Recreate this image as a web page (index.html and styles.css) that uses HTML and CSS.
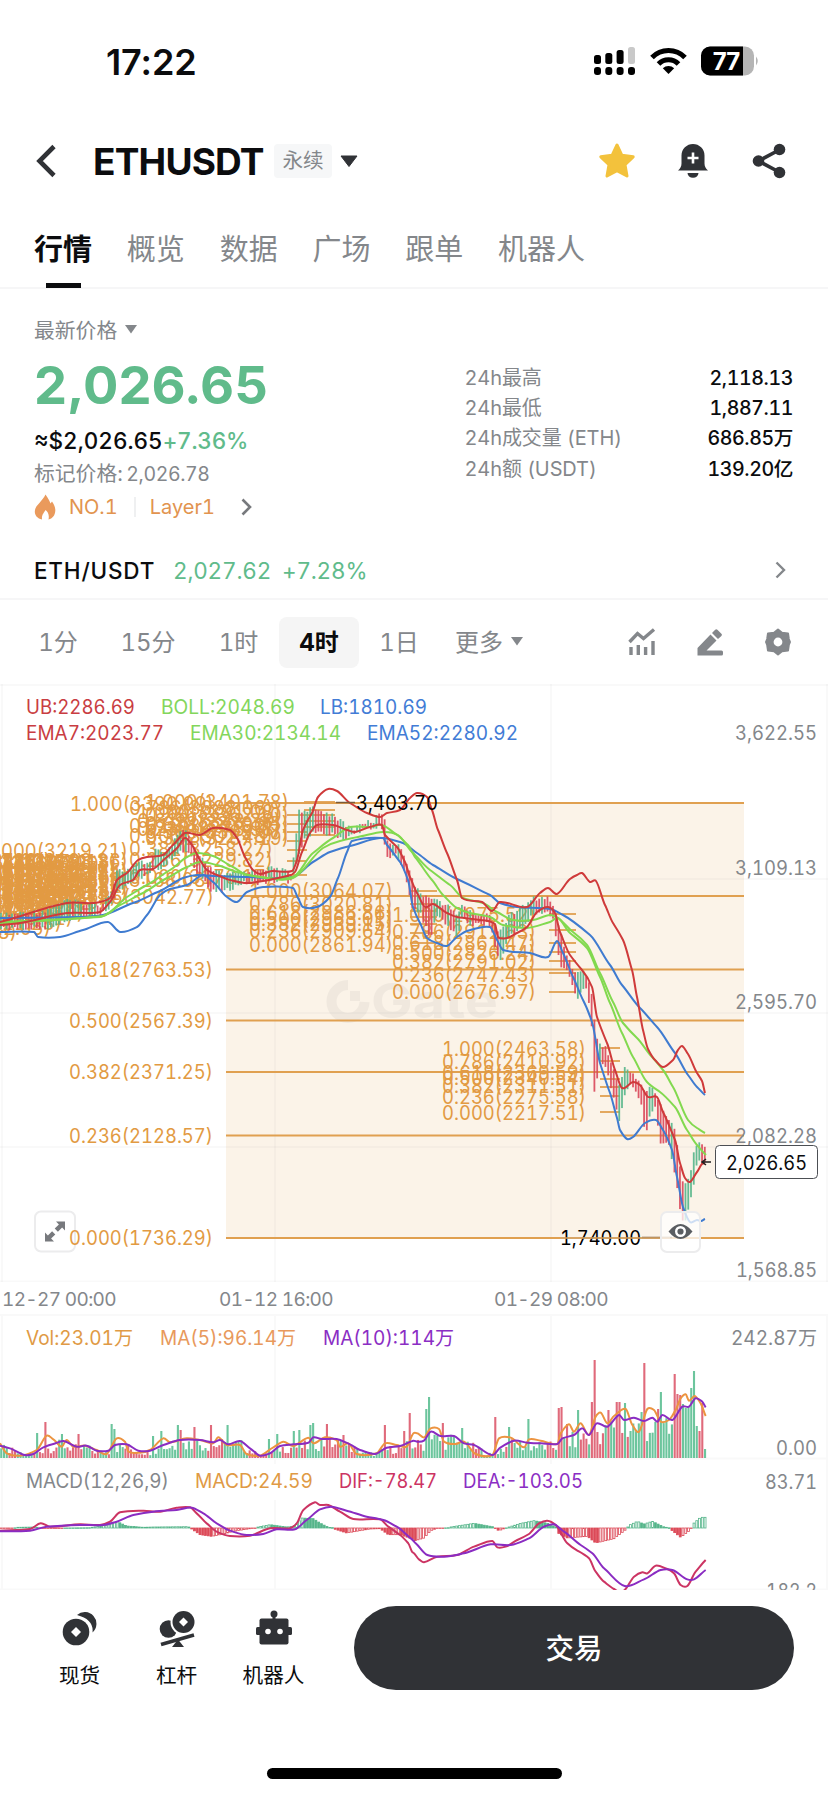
FILE: index.html
```
<!DOCTYPE html>
<html lang="zh-CN">
<head>
    <meta charset="UTF-8">
    <title>ETHUSDT 永续</title>
    <link rel="stylesheet" href="styles.css">
</head>
<body>
    <!-- Status bar -->
    <div class="status">
        <span class="time">17:22</span>
        <svg class="signal" width="166" height="30" viewBox="0 0 166 30">
            <g fill="#000">
                <rect x="0" y="9" width="7" height="9" rx="2.5"/>
                <rect x="11.3" y="7" width="7" height="11" rx="2.5"/>
                <rect x="22.6" y="4" width="7" height="14" rx="2.5"/>
                <rect x="34" y="1" width="7" height="17" rx="2.5" fill="#c9c9c9"/>
                <rect x="0" y="21" width="7" height="8" rx="3"/>
                <rect x="11.3" y="21" width="7" height="8" rx="3"/>
                <rect x="22.6" y="21" width="7" height="8" rx="3"/>
                <rect x="34" y="21" width="7" height="8" rx="3"/>
            </g>
            <g fill="none" stroke="#000" stroke-width="5">
                <path d="M58 11.5a23 23 0 0 1 33 0"/>
                <path d="M64.5 18a14 14 0 0 1 20 0"/>
            </g>
            <path d="M68.8 22.3a8.2 8.2 0 0 1 11.4 0L74.5 28z" fill="#000"/>
            <rect x="107" y="0.5" width="53" height="29" rx="9" fill="#b5b5b5"/>
            <path d="M116 .5h33v29h-33a9 9 0 0 1-9-9v-11a9 9 0 0 1 9-9z" fill="#000"/>
            <path d="M162 10.5q3.5 4.5 0 9z" fill="#b5b5b5"/>
            <text x="118" y="23.5" textLength="29" font-size="24" font-weight="700" fill="#fff">77</text>
        </svg>
    </div>

    <!-- Title -->
    <header class="title">
        <svg class="back" width="22" height="34" viewBox="0 0 22 34"><path d="M19 2.500L4.500 17l14.500 14.500" fill="none" stroke="#303236" stroke-width="4.600"/></svg>
        <h1>ETHUSDT</h1>
        <span class="badge">永续</span>
        <svg class="caret" width="18" height="12" viewBox="0 0 18 12"><path d="M1 1h16L9 11.500z" fill="#303236" stroke="#303236" stroke-linejoin="round"/></svg>
        <div class="actions">
            <svg width="38" height="36" viewBox="0 0 38 36"><path d="M19 2l4.900 10.300 11.300 1.500-8.200 7.900 2 11.300L19 27.600 9 33l2-11.300-8.200-7.900 11.300-1.500z" fill="#f3c23c" stroke="#f3c23c" stroke-width="3" stroke-linejoin="round"/></svg>
            <svg width="32" height="36" viewBox="0 0 32 36">
                <path d="M1 27.500q3.500-3 3.500-7V12.500a11.500 11.500 0 0 1 23 0v8q0 4 3.500 7z" fill="#303236"/>
                <path d="M10.500 30h11a5.500 4.800 0 0 1-11 0z" fill="#303236"/>
                <path d="M16 9.500v11M10.500 15h11" stroke="#fff" stroke-width="2.600"/>
            </svg>
            <svg width="34" height="36" viewBox="0 0 34 36">
                <path d="M28 6.500L6.500 18 28 29.500" fill="none" stroke="#303236" stroke-width="3.600"/>
                <g fill="#303236"><circle cx="27.500" cy="6.500" r="5.800"/><circle cx="6.500" cy="18" r="5.800"/><circle cx="27.500" cy="29.500" r="5.800"/></g>
            </svg>
        </div>
    </header>

    <nav class="tabs">
        <a class="selected">行情</a>
        <a>概览</a>
        <a>数据</a>
        <a>广场</a>
        <a>跟单</a>
        <a>机器人</a>
    </nav>

    <!-- Price -->
    <section class="price">
        <div class="left">
            <div class="label">最新价格<svg width="14" height="10" viewBox="0 0 14 10"><path d="M1 1h12L7 9.500z" fill="#84878b"/></svg></div>
            <div class="last">2,026.65</div>
            <div class="approx">≈$2,026.65<span class="up">+7.36%</span></div>
            <div class="mark">标记价格: <span>2,026.78</span></div>
            <div class="tags">
                <svg width="22" height="26" viewBox="0 0 22 26"><path d="M11.500 0.500C14.500 5 16 7.500 16.500 9.500L18 7.500C20.500 11 21.500 14 21.300 17C21 21.500 18.500 24.500 14.500 25.500C15.500 21 14 18 11.500 16C10 19 7.500 20.500 8 25.500C3.500 24.500 .8 21.500 .8 17.500C.8 11.500 8 8 11.500 .5z" fill="#ea9a5c"/></svg>
                <span>NO.1</span>
                <i></i>
                <span>Layer1</span>
                <svg class="more" width="13" height="18" viewBox="0 0 13 18"><path d="M2.500 1.500L10 9l-7.500 7.500" fill="none" stroke="#77797d" stroke-width="2.600"/></svg>
            </div>
        </div>
        <div class="stats">
            <div><span>24h最高</span><b>2,118.13</b></div>
            <div><span>24h最低</span><b>1,887.11</b></div>
            <div><span>24h成交量 (ETH)</span><b>686.85万</b></div>
            <div><span>24h额 (USDT)</span><b>139.20亿</b></div>
        </div>
    </section>

    <div class="pair">
        <b>ETH/USDT</b>
        <span>2,027.62</span>
        <span>+7.28%</span>
        <svg width="13" height="18" viewBox="0 0 13 18"><path d="M2.500 1.500L10 9l-7.500 7.500" fill="none" stroke="#84878b" stroke-width="2.400"/></svg>
    </div>

    <!-- Intervals -->
    <div class="intervals">
        <div class="periods">
            <span>1分</span>
            <span>15分</span>
            <span>1时</span>
            <span class="selected">4时</span>
            <span>1日</span>
            <span>更多<svg width="14" height="10" viewBox="0 0 14 10"><path d="M1 1h12L7 9.500z" fill="#84878b"/></svg></span>
        </div>
        <div class="tools">
            <svg width="28" height="28" viewBox="0 0 28 28" fill="none" stroke="#84878b" stroke-width="3.400">
                <path d="M1.500 14L9.500 5.500l6 5L26 1.500"/>
                <path d="M3 19v8M10.300 17v10M17.600 19v8M25 13v14"/>
            </svg>
            <svg width="28" height="28" viewBox="0 0 28 28" fill="#84878b">
                <path d="M14.500 6.500l6 6L10.500 22.500H25.500a1.500 1.500 0 0 1 1.500 1.500v2a1.500 1.500 0 0 1-1.500 1.500H1.500v-7.500z"/>
                <path d="M16 5l3.200-3.200a1.500 1.500 0 0 1 2.200 0l4 4a1.500 1.500 0 0 1 0 2.200L22 11z"/>
            </svg>
            <svg width="28" height="28" viewBox="0 0 28 28">
                <path d="M14 1.500l4 3.200 6 .8.800 5.500L26 14l-1.200 3-.8 5.500-6 .8-4 3.200-4-3.200-6-.8-.8-5.500L2 14l1.200-3L4 5.500l6-.8z" fill="#84878b" stroke="#84878b" stroke-width="2" stroke-linejoin="round"/>
                <circle cx="14" cy="14" r="4.400" fill="#fff"/>
            </svg>
        </div>
    </div>

    <!-- Candles, Bollinger bands, EMA and Fibonacci levels -->
    <svg class="chart" width="828" height="598" viewBox="0 684 828 598">
        <rect x="226" y="803" width="518" height="435" fill="#fbf3e8"/>
        <g class="grid">
            <path d="M2 684v598M275 684v598M551 684v598M827 684v598"/>
            <path d="M0 685h828M0 879h828M0 1013h828M0 1147h828M0 1281.500h828"/>
        </g>
        <g class="watermark">
            <path d="M348 985a16.500 16.500 0 1 0 16.500 17" fill="none" stroke-width="10"/>
            <rect x="350" y="991" width="10" height="10" stroke="none"/>
            <text x="371" y="1018" textLength="127" lengthAdjust="spacingAndGlyphs" font-size="48" font-weight="700" stroke="none">Gate</text>
        </g>
        <path class="fib" d="M226 803h518M226 896h518M226 969.500h518M226 1020.500h518M226 1072h518M226 1135.500h518M226 1238h518"/>
        <g id="fibTicks"></g>
        <g id="fibLabels" class="orange"></g>
        <g id="candles"></g>
        <g id="lines" class="lines"></g>
        <g class="legend">
            <text x="26" y="714" textLength="109" lengthAdjust="spacingAndGlyphs" class="c-red">UB:2286.69</text>
            <text x="161" y="714" textLength="134" lengthAdjust="spacingAndGlyphs" class="c-green">BOLL:2048.69</text>
            <text x="320" y="714" textLength="107" lengthAdjust="spacingAndGlyphs" class="c-blue">LB:1810.69</text>
            <text x="26" y="739.500" textLength="138" lengthAdjust="spacingAndGlyphs" class="c-red">EMA7:2023.77</text>
            <text x="190" y="739.500" textLength="151" lengthAdjust="spacingAndGlyphs" class="c-green">EMA30:2134.14</text>
            <text x="367" y="739.500" textLength="151" lengthAdjust="spacingAndGlyphs" class="c-blue">EMA52:2280.92</text>
        </g>
        <g class="scale">
            <text x="735" y="740" textLength="82" lengthAdjust="spacingAndGlyphs">3,622.55</text>
            <text x="735" y="874.500" textLength="82" lengthAdjust="spacingAndGlyphs">3,109.13</text>
            <text x="735" y="1008.500" textLength="82" lengthAdjust="spacingAndGlyphs">2,595.70</text>
            <text x="735" y="1143" textLength="82" lengthAdjust="spacingAndGlyphs">2,082.28</text>
            <text x="736" y="1277" textLength="81" lengthAdjust="spacingAndGlyphs">1,568.85</text>
        </g>
        <g class="extreme">
            <path d="M336 802.500h19M642 1237.500h30"/>
            <text x="356" y="810" textLength="82" lengthAdjust="spacingAndGlyphs">3,403.70</text>
            <text x="560" y="1245" textLength="81" lengthAdjust="spacingAndGlyphs">1,740.00</text>
        </g>
        <path d="M560 1238h110" stroke="#d5a66c" stroke-width="1.500"/>
        <path d="M711 1162h-8M706 1159l-4 3 4 3" stroke="#222" stroke-width="1.500" fill="none"/>
        <rect x="715.500" y="1145.500" width="102" height="33" rx="4" fill="#fff" stroke="#4c4f54"/>
        <text x="726" y="1170" textLength="81" lengthAdjust="spacingAndGlyphs" class="now">2,026.65</text>
        <g class="btn">
            <rect x="35" y="1211.500" width="40" height="40" rx="6"/>
            <path d="M56 1221.500h9v9l-2.900-2.900-4.200 4.200-3.200-3.200 4.200-4.200zM54 1241.500h-9v-9l2.900 2.900 4.200-4.200 3.200 3.200-4.200 4.200z" fill="#77797d"/>
            <rect x="661" y="1212" width="39" height="40" rx="6" fill-opacity=".75"/>
            <path d="M668.500 1231.500q12-15 24 0q-12 15-24 0z" fill="#5a5d61"/>
            <circle cx="680.500" cy="1231.500" r="4.300" fill="#5a5d61" stroke="#fff" stroke-width="2.400"/>
        </g>
        <text x="69" y="1245" textLength="144" lengthAdjust="spacingAndGlyphs" class="orange">0.000(1736.29)</text>
    </svg>

    <div class="dates">
        <span>12-27 00:00</span>
        <span>01-12 16:00</span>
        <span>01-29 08:00</span>
    </div>

    <!-- Volume -->
    <svg class="chart" width="828" height="150" viewBox="0 1314 828 150">
        <path class="grid" d="M0 1315h828M2 1314v150M275 1314v150M551 1314v150M827 1314v150M0 1458.500h828"/>
        <g id="volume"></g>
        <g id="volumeLines" class="lines"></g>
        <g class="legend">
            <text x="26" y="1345" textLength="107" lengthAdjust="spacingAndGlyphs" fill="#e09a45">Vol:23.01万</text>
            <text x="160" y="1345" textLength="136" lengthAdjust="spacingAndGlyphs" fill="#e8995c">MA(5):96.14万</text>
            <text x="323" y="1345" textLength="131" lengthAdjust="spacingAndGlyphs" class="c-purple">MA(10):114万</text>
        </g>
        <g class="scale">
            <text x="731" y="1345" textLength="86" lengthAdjust="spacingAndGlyphs">242.87万</text>
            <text x="776" y="1454.500" textLength="41" lengthAdjust="spacingAndGlyphs">0.00</text>
        </g>
    </svg>

    <!-- MACD -->
    <svg class="chart" width="828" height="126" viewBox="0 1464 828 126">
        <path class="grid" d="M2 1464v126M275 1500v90M551 1500v90M827 1464v126M0 1589.500h828"/>
        <g id="macd"></g>
        <g id="macdLines" class="lines"></g>
        <g class="legend">
            <text x="26" y="1488" textLength="143" lengthAdjust="spacingAndGlyphs" fill="#84878b">MACD(12,26,9)</text>
            <text x="195" y="1488" textLength="118" lengthAdjust="spacingAndGlyphs" fill="#e09a45">MACD:24.59</text>
            <text x="339" y="1488" textLength="98" lengthAdjust="spacingAndGlyphs" fill="#cc3463">DIF:-78.47</text>
            <text x="463" y="1488" textLength="120" lengthAdjust="spacingAndGlyphs" class="c-purple">DEA:-103.05</text>
        </g>
        <g class="scale">
            <text x="765" y="1489" textLength="52" lengthAdjust="spacingAndGlyphs">83.71</text>
            <text x="766" y="1598" textLength="51" lengthAdjust="spacingAndGlyphs">182.2</text>
        </g>
    </svg>

    <!-- Bottom bar -->
    <footer class="bottom">
        <div class="item">
            <svg width="36" height="38" viewBox="0 0 36 38">
                <path d="M15 5a11.500 11.500 0 1 1 15.500 17.500q1.500-13-15.500-17.500z" fill="#303236"/>
                <circle cx="14" cy="22" r="13.300" fill="#303236"/>
                <path d="M14 17l5 5-5 5-5-5z" fill="#fff"/>
            </svg>
            <span>现货</span>
        </div>
        <div class="item">
            <svg width="36" height="38" viewBox="0 0 36 38">
                <circle cx="9.500" cy="19" r="8.800" fill="#303236"/>
                <circle cx="24.500" cy="12" r="13" fill="#fff"/>
                <circle cx="24.500" cy="12" r="11" fill="#303236"/>
                <path d="M24.500 7.500l4.500 4.500-4.500 4.500-4.500-4.500z" fill="#fff"/>
                <path d="M2 34.500L35 25" stroke="#303236" stroke-width="3.600"/>
                <path d="M19 29.500l6 7.500H13z" fill="#303236"/>
            </svg>
            <span>杠杆</span>
        </div>
        <div class="item">
            <svg width="36" height="38" viewBox="0 0 36 38" fill="#303236">
                <circle cx="18" cy="4" r="3.500"/>
                <path d="M16.500 5h3v5h-3z"/>
                <rect x="3.500" y="8.500" width="29" height="26" rx="2"/>
                <rect x="0" y="17" width="36" height="8" rx="1.500"/>
                <circle cx="12" cy="21.500" r="2.800" fill="#fff"/>
                <circle cx="24" cy="21.500" r="2.800" fill="#fff"/>
            </svg>
            <span>机器人</span>
        </div>
        <button>交易</button>
    </footer>
    <div class="home"></div>

    <script src="chart.js"></script>
</body>
</html>
```
FILE: styles.css
```
* {
    box-sizing: border-box;
}
body {
    margin: 0;
    width: 828px;
    height: 1796px;
    overflow: hidden;
    background: #fff;
    color: #0b0c0e;
    font-family: Inter, 'Noto Sans CJK SC', sans-serif;
    font-variant-numeric: tabular-nums;
}
svg {
    display: block;
    flex: none;
}
.status {
    display: flex;
    justify-content: space-between;
    height: 124px;
    padding: 46px 68px 0 106px;
}
.time {
    font-size: 36px;
    font-weight: 600;
    font-variant-numeric: normal;
    line-height: 33px;
    letter-spacing: -0.1px;
}
.title {
    display: flex;
    align-items: center;
    height: 74px;
    padding: 0 42px 0 35px;
}
h1 {
    margin: 0 0 0 36px;
    width: 181px;
    font-size: 37px;
    font-weight: 700;
    letter-spacing: -0.8px;
}
.badge {
    width: 58px;
    height: 34px;
    border-radius: 4px;
    background: #f6f7f8;
    color: #84878b;
    font-size: 20.6px;
    line-height: 34px;
    text-align: center;
}
.caret {
    margin-left: 8px;
}
.actions {
    display: flex;
    align-items: center;
    margin-left: auto;
    gap: 43px;
}
.actions svg:nth-child(1) {
    margin-right: -2px;
}
.tabs {
    display: flex;
    gap: 34.8px;
    height: 91px;
    padding: 29px 34px 0;
    border-bottom: 2px solid #f6f6f7;
}
.tabs a {
    height: 61px;
    font-size: 29px;
    line-height: 46px;
    color: #84878b;
}
.tabs .selected {
    color: #0b0c0e;
    font-weight: 700;
    background: linear-gradient(#0b0c0e, #0b0c0e) center bottom / 35px 5px no-repeat;
}
.price {
    display: flex;
    height: 255px;
    padding: 24px 35px 0 34px;
}
.left {
    width: 430.5px;
}
.label {
    display: flex;
    align-items: center;
    height: 32px;
    font-size: 20.8px;
    color: #84878b;
    gap: 7px;
}
.last {
    height: 81px;
    font-size: 52.5px;
    font-weight: 700;
    line-height: 80px;
    font-variant-numeric: normal;
    color: #60bb8b;
}
.approx {
    height: 30px;
    font-size: 22.5px;
    font-weight: 500;
    line-height: 30px;
}
.up {
    color: #60bb8b;
    letter-spacing: -0.2px;
}
.mark {
    height: 34px;
    font-size: 20.8px;
    line-height: 36px;
    color: #84878b;
    word-spacing: -2px;
}
.mark span {
    font-size: 19.5px;
    letter-spacing: -0.4px;
}
.tags {
    display: flex;
    align-items: center;
    height: 34px;
    font-size: 20px;
    color: #e2944f;
}
.tags span {
    margin-left: 13px;
}
.tags i {
    width: 2px;
    height: 20px;
    margin: 0 1px 0 16px;
    background: #eff0f1;
}
.tags .more {
    margin-left: 25px;
}
.stats {
    flex: 1;
    padding-top: 50px;
}
.stats div {
    display: flex;
    justify-content: space-between;
    height: 30.2px;
    line-height: 30px;
    font-size: 20px;
    color: #84878b;
}
.stats div span {
    letter-spacing: -0.1px;
}
.stats b {
    font-weight: 500;
    color: #0b0c0e;
    font-size: 19.6px;
    letter-spacing: -0.4px;
}
.pair {
    display: flex;
    align-items: center;
    height: 56px;
    padding: 0 41px 2px 34px;
    border-bottom: 2px solid #f6f6f7;
    font-size: 22.5px;
    color: #60bb8b;
    letter-spacing: -0.2px;
}
.pair b {
    width: 139px;
    font-weight: 500;
    color: #0b0c0e;
    letter-spacing: 0.8px;
}
.pair span {
    width: 109px;
}
.pair svg {
    margin-left: auto;
}
.intervals {
    display: flex;
    align-items: center;
    justify-content: space-between;
    height: 84px;
    padding: 0 36px 0 18px;
}
.periods {
    display: flex;
    font-size: 24px;
    color: #84878b;
}
.periods span {
    display: flex;
    align-items: center;
    justify-content: center;
    width: 80px;
    height: 51px;
    padding-bottom: 3px;
    gap: 8px;
}
.periods span:nth-child(2) {
    width: 100px;
}
.periods span:nth-child(3) {
    width: 81px;
}
.periods span:last-child {
    width: 101px;
    gap: 7px;
}
.periods .selected {
    background: #f5f5f5;
    border-radius: 8px;
    color: #0b0c0e;
    font-weight: 700;
}
.tools {
    display: flex;
    gap: 40px;
}

/* charts */
.chart {
    overflow: hidden;
    font-size: 19.5px;
}
.grid {
    fill: none;
    stroke: #84878b;
    stroke-opacity: 0.05;
    stroke-width: 2;
}
.watermark {
    fill: #777;
    stroke: #777;
    opacity: 0.08;
}
.fib {
    fill: none;
    stroke: #e0a050;
    stroke-width: 1.8;
}
.orange {
    fill: #e29a42;
}
.scale {
    fill: #84878b;
}
.lines {
    fill: none;
    stroke-width: 2;
    stroke-linejoin: round;
}
.extreme {
    stroke: none;
}
.extreme path {
    stroke: #7b5b39;
    stroke-width: 1.5;
}
.now {
    fill: #0b0c0e;
}
.btn rect {
    fill: #fff;
    stroke: #ececed;
    stroke-width: 2;
}
.c-red {
    fill: #c93d42;
}
.c-green {
    fill: #83d65c;
}
.c-blue {
    fill: #427cd6;
}
.c-purple {
    fill: #8b2ec4;
}
.dates {
    display: grid;
    grid-template-columns: 217px 275px 1fr;
    height: 32px;
    padding-left: 2px;
    font-size: 19px;
    line-height: 36px;
    letter-spacing: -0.65px;
    color: #84878b;
}

/* bottom bar */
.bottom {
    display: flex;
    height: 106px;
    padding: 16px 34px 0 31px;
}
.item {
    display: flex;
    flex-direction: column;
    align-items: center;
    width: 97px;
    padding-top: 4px;
    font-size: 20.6px;
}
.item span {
    margin-top: 13px;
    line-height: 30px;
}
.bottom button {
    width: 440px;
    height: 84px;
    margin-left: auto;
    padding-bottom: 4px;
    border: 0;
    border-radius: 42px;
    background: #303236;
    color: #fff;
    font: 500 28.5px Inter, 'Noto Sans CJK SC', sans-serif;
}
.home {
    width: 295px;
    height: 11px;
    margin: 72px 0 0 267px;
    border-radius: 6px;
    background: #000;
}
```
FILE: chart.js
```
const NS = 'http://www.w3.org/2000/svg';
const UP = '#55b58a', DOWN = '#d9475a';

function add(id, tag, attrs, text) {
    const el = document.createElementNS(NS, tag);
    for (const k in attrs) el.setAttribute(k, attrs[k]);
    if (text) el.textContent = text;
    document.getElementById(id).appendChild(el);
}

function parse(str) {
    return str.trim().split(/\s+/).map(p => p.split(',').map(Number));
}

// smooth curve through the points
function line(id, color, pts) {
    let d = `M${pts[0][0]} ${pts[0][1]}`;
    for (let i = 0; i < pts.length - 1; i++) {
        const p0 = pts[i - 1] || pts[i], p1 = pts[i], p2 = pts[i + 1], p3 = pts[i + 2] || p2;
        const w = (p2[0] - p1[0]) / 3;
        const m1 = p2[0] > p0[0] ? (p2[1] - p0[1]) / (p2[0] - p0[0]) : 0;
        const m2 = p3[0] > p1[0] ? (p3[1] - p1[1]) / (p3[0] - p1[0]) : 0;
        const y1 = p1[1] + m1 * w * 0.8, y2 = p2[1] - m2 * w * 0.8;
        d += `C${(p1[0] + w).toFixed(1)} ${y1.toFixed(1)} ${(p2[0] - w).toFixed(1)} ${y2.toFixed(1)} ${p2[0]} ${p2[1]}`;
    }
    add(id, 'path', { d, stroke: color });
}

// value of column k at x, linear between the known points
function at(pts, x, k) {
    for (let i = 1; i < pts.length; i++) {
        if (x <= pts[i][0]) {
            const a = pts[i - 1], b = pts[i];
            return a[k] + (b[k] - a[k]) * (x - a[0]) / (b[0] - a[0]);
        }
    }
    return pts[pts.length - 1][k];
}

function noise(i) {
    const n = Math.sin(i * 12.9898) * 43758.5453;
    return n - Math.floor(n);
}

// Fibonacci labels: left edge, then y + text
function labels(x, rows) {
    rows.forEach(([y, t]) => add('fibLabels', 'text', { x, y: y + 7, textLength: 144, lengthAdjust: 'spacingAndGlyphs' }, t));
}
labels(69, [[969.5, '0.618(2763.53)'], [1021, '0.500(2567.39)'], [1072, '0.382(2371.25)'], [1136, '0.236(2128.57)']]);
labels(70, [[804, '1.000(3390.99)'], [897, '0.786(3042.77)']]);
labels(145, [[802, '1.000(3401.78)'], [815, '0.786(3362.10)'], [824, '0.618(3330.95)'], [832, '0.500(3309.07)'], [838, '0.382(3287.19)']]);
labels(129, [[808, '0.786(3388.06)'], [826, '0.618(3330.80)'], [836, '0.500(3302.48)'], [849, '0.382(3258.27)'], [860, '0.236(3229.82)'], [877, '0.000(3176.17)']]);
labels(137, [[812, '1.000(3391.08)'], [821, '0.618(3348.38)'], [829, '0.236(3278.98)']]);
labels(249, [[891, '1.000(3064.07)'], [904, '0.786(3020.81)'], [913, '0.618(2986.86)'], [919, '0.500(2963.01)'], [924, '0.382(2939.15)'], [931, '0.236(2909.64)'], [944.5, '0.000(2861.94)']]);
labels(392, [[915, '1.000(2975.52)'], [932, '0.786(2911.63)'], [943, '0.618(2861.47)'], [953, '0.500(2826.24)'], [962, '0.382(2791.02)'], [975, '0.236(2747.43)'], [992, '0.000(2676.97)']]);
labels(442, [[1049, '1.000(2463.58)'], [1062, '0.786(2410.92)'], [1073, '0.618(2369.59)'], [1078, '0.500(2340.54)'], [1086, '0.382(2311.51)'], [1097, '0.236(2275.58)'], [1113, '0.000(2217.51)']]);
labels(-16, [[851, '1.000(3219.21)']]);
labels(69, [[880, '0.500(3168.08)']]);
labels(-127, [[932, '0.000(2988.68)']]);
// overlapping drawings at the left edge
for (let i = 0; i < 8; i++) {
    labels(-16 - i * 11, [0, 1, 2, 3, 4, 5].map(j => [
        861 + j * (6 + i * 1) + noise(i * 7 + j) * 4,
        (0.786 - j * 0.118).toFixed(3) + '(' + (3188.36 - i * 9.18 - j * 22.41).toFixed(2) + ')'
    ]));
}

function ticks(x1, x2, ys) {
    ys.forEach(y => add('fibTicks', 'path', { class: 'fib', d: `M${x1} ${y}H${x2}` }));
}
ticks(287, 307, [803, 815, 824, 832, 841, 850, 861, 875]);
ticks(304, 335, [802, 810, 815, 821, 827, 835]);
ticks(410, 437, [891, 896, 904, 911, 917, 924, 933, 943]);
ticks(549, 576, [914, 930, 943, 952, 961, 973, 992]);
ticks(600, 620, [1048, 1061, 1072, 1079, 1087, 1096, 1112]);
ticks(80, 92, [898, 904, 909]);

// Candles: x, high, low
const range = parse(`0,915,930 30,912,928 45,910,930 65,900,920 100,905,915 112,890,905 117,870,890 127,870,885
    140,862,878 150,862,875 155,848,870 165,855,866 175,840,855 184,828,852 190,838,855 197,855,875 203,860,877
    210,868,892 225,875,892 240,872,884 260,868,883 275,868,882 292,872,882 299,808,855 305,812,840 312,808,833
    325,812,835 335,815,835 345,825,840 355,828,834 362,822,830 373,822,830 380,810,825 384,815,840 387,840,860
    397,845,855 402,848,865 407,862,885 413,880,910 420,895,912 430,895,940 437,900,915 447,905,925 457,915,938
    462,903,920 470,912,925 490,915,925 497,928,955 500,930,962 510,915,935 520,907,930 527,905,925 532,898,915
    547,897,912 553,905,920 560,930,965 567,955,970 573,968,990 578,972,1000 585,972,985 591,985,1010 593,1010,1070
    595,1025,1105 599,1045,1060 605,1045,1065 612,1065,1090 619,1085,1125 625,1068,1092 630,1070,1085 637,1078,1093
    643,1085,1110 645,1095,1140 650,1085,1115 655,1093,1108 661,1105,1145 668,1118,1140 675,1130,1175 680,1165,1210
    684,1185,1225 690,1175,1203 693,1155,1190 697,1143,1165 701,1145,1160 703,1138,1170 706,1148,1156`);
for (let i = 0; i < 256; i++) {
    const x = 1 + i * 2.76;
    const n = noise(i);
    const hi = at(range, x, 1) + n * 5 - 2;
    const lo = at(range, x, 2) - noise(i + 40) * 5 + 2;
    const slope = at(range, x + 4, 2) - at(range, x - 4, 2);
    const up = slope < -3 ? n < 0.85 : slope > 3 ? n < 0.15 : n < 0.45;
    add('candles', 'rect', { x: x - 0.9, y: hi, width: 1.8, height: Math.max(3, lo - hi), fill: up ? UP : DOWN, 'fill-opacity': 0.9 });
}

line('lines', '#3f7bd0', parse(`0,918 77,917 103,915 133,903 160,891 183,878 197,875 213,876 247,877 293,877 313,862
    330,852 350,846 380,838 403,843 417,853 433,865 457,879 490,895 500,903 517,907 550,909 563,915 590,935 610,965
    622,985 640,1008 657,1027 675,1053 688,1075 697,1087 705,1095`));
line('lines', '#3f7bd0', parse(`0,932 34,932 38,937 60,937 83,930 108,922 120,932 137,927 147,915 160,895 170,889
    187,885 203,875 213,882 227,897 237,902 247,892 263,887 293,888 298,898 303,907 317,907 330,897 338,878 347,852
    352,841 383,838 387,845 400,862 408,880 413,907 420,923 427,938 437,943 447,946 457,937 467,931 490,927 497,940
    503,950 530,953 548,957 557,941 563,953 573,977 583,1000 592,1022 600,1063 610,1093 617,1118 620,1130 627,1139
    633,1137 645,1123 656,1120 663,1130 672,1150 677,1177 683,1207 690,1222 697,1220 701,1221 705,1219`));
line('lines', '#82d94f', parse(`0,922 100,917 110,912 127,897 147,885 170,870 187,857 197,853 213,856 233,867 247,875
    293,877 313,853 333,838 350,827 370,827 382,825 397,835 408,845 415,857 432,880 443,895 457,908 470,913 490,917
    503,925 527,928 550,922 558,918 570,933 587,948 600,977 610,1003 622,1033 633,1057 647,1082 660,1092 675,1107
    687,1130 697,1145 706,1155`));
line('lines', '#82d94f', parse(`0,923 103,916 120,905 143,893 167,878 187,867 200,862 217,865 237,872 260,877 293,878
    323,848 340,841 358,837 383,832 398,835 412,852 430,870 450,885 463,898 483,903 497,912 513,920 533,920 550,915
    558,918 573,932 587,945 600,973 613,1002 623,1023 637,1038 652,1057 663,1070 673,1087 688,1120 697,1128 705,1133`));
line('lines', '#cf3a3a', parse(`0,925 20,923 67,913 100,912 110,902 120,885 133,880 140,870 153,869 167,857 177,848
    185,838 192,845 200,860 207,870 217,875 230,880 247,883 263,881 287,876 295,872 302,852 310,833 317,825 333,825
    347,830 355,832 370,827 382,825 385,835 397,847 405,862 410,877 417,893 425,907 433,904 447,913 457,917 480,920
    495,924 498,937 507,938 517,933 527,927 537,912 548,907 555,913 560,932 570,955 582,970 592,987 597,1017
    607,1043 615,1070 622,1088 633,1082 640,1085 648,1097 657,1097 663,1112 675,1140 680,1163 685,1178 690,1182
    697,1172 702,1164 705,1163`));
line('lines', '#cf3a3a', parse(`0,922 67,903 93,903 110,898 117,880 127,873 138,860 147,857 163,855 173,845 185,833
    200,835 213,828 230,830 237,838 245,857 253,870 260,874 272,871 292,871 297,860 303,830 312,813 318,797 328,789
    337,791 350,803 367,813 380,817 387,813 400,810 410,798 417,793 427,797 432,810 438,830 447,853 457,880 462,898
    482,902 492,911 500,902 527,907 540,893 548,888 557,894 570,879 577,875 582,873 590,882 596,881 605,905 613,923
    623,940 632,970 637,997 643,1030 648,1049 655,1060 663,1067 673,1060 678,1050 682,1046 688,1054 697,1073
    702,1081 705,1093`));

// Volume and MACD points are stored at 3x, in two halves of the width
function halves(left, right) {
    return parse(left).concat(parse(right).map(([x, y]) => [x + 1242, y]));
}
function toPx(pts) {
    return pts.map(([x, y]) => [x / 3, 1310 + y / 3]);
}

const ma10 = halves(`0,407 30,415 75,435 100,432 130,412 160,402 190,393 230,410 260,407 290,422 325,422 345,405
    380,403 415,422 450,422 490,405 540,390 600,390 640,397 660,390 685,403 720,393 750,415 780,437 810,430 840,408
    880,403 925,398 940,382 965,387 1010,387 1050,403 1080,420 1125,432 1160,413 1200,408 1240,392`,
    `10,395 30,392 50,365 80,378 120,378 150,400 180,405 235,435 260,412 300,392 340,398 380,400 430,402 445,385
    480,375 505,355 525,375 548,340 580,350 615,315 630,330 660,323 690,333 715,323 730,335 745,315 775,330 805,290
    825,290 845,265 865,275 875,292`);
const ma5 = halves(`0,400 20,430 60,437 110,420 140,377 160,388 185,410 200,390 220,410 255,407 290,420 320,432
    350,385 375,395 385,425 420,428 450,420 490,385 510,397 560,385 600,390 640,400 655,382 680,405 720,405 740,432
    780,437 820,412 850,395 880,408 925,383 940,400 975,382 1010,390 1020,410 1045,400 1070,432 1130,430 1155,400
    1190,405 1220,410 1240,370`,
    `10,370 30,382 50,355 75,357 90,395 125,402 150,395 185,432 235,435 255,385 290,383 330,412 345,388 380,392
    430,402 440,370 465,343 480,365 500,340 525,375 545,320 560,308 580,340 600,318 635,297 655,345 675,365 700,297
    720,300 740,335 765,330 785,300 800,265 815,253 825,272 842,258 860,280 875,318`);

// tall bars: x, height, 1 = up
const spikes = parse(`38,25,1 46,36,0 62,24,1 79,24,0 111,34,1 115,29,1 153,22,1 162,27,1 178,33,1 181,28,0 195,31,0
    211,33,0 228,33,1 269,19,1 277,24,1 294,27,1 299,28,1 311,33,1 313,35,1 327,34,0 344,23,0 385,33,0 404,27,0
    410,45,0 427,49,1 429,61,1 443,35,0 462,30,1 495,41,0 509,31,1 528,39,1 559,50,0 562,51,0 568,34,0 578,48,1
    592,56,0 595,98,0 609,48,0 617,56,0 620,56,0 625,55,1 642,46,1 644,95,0 658,49,0 661,66,1 675,84,0 678,64,0
    681,63,0 684,54,1 686,50,1 689,52,1 691,70,1 694,87,1 697,32,1 700,27,0 703,55,0 705,9,1`);
for (let i = 0; i < 256; i++) {
    const x = 1.2 + i * 2.76;
    const s = spikes.find(p => Math.abs(p[0] - x) < 1.38);
    const avg = (445 - at(ma10, x * 3, 1)) / 3;
    const h = s ? s[1] : Math.max(2, avg * (0.35 + noise(i + 9) * 0.8));
    const up = s ? s[2] : noise(Math.floor(i / 3) + 5) < 0.5;
    add('volume', 'rect', { x: x - 1, y: 1458 - h, width: 2.1, height: h, fill: up ? '#6cc59d' : '#e06a7b' });
}
line('volumeLines', '#ec9440', toPx(ma5));
line('volumeLines', '#8a2cc2', toPx(ma10));

// MACD histogram: positive is above zero
const hist = halves(`0,-1 40,-1 50,2 110,3 115,-1 270,1 330,10 350,20 380,6 430,2 460,3 560,4 572,2 575,-3 600,-20
    635,-25 670,-18 700,-10 750,-2 768,-1 770,2 810,10 860,3 885,6 905,30 940,28 960,15 985,2 998,1 1000,-2 1040,-15
    1080,-8 1110,-3 1140,-2 1165,-20 1200,-20 1242,-35`,
    `3,-38 30,-30 50,-8 70,-1 105,1 110,3 180,14 240,3 245,-3 255,-8 270,-2 285,3 320,14 360,22 400,14 428,2 432,-15
    460,-30 520,-25 545,-45 600,-32 635,-5 645,8 670,20 690,12 715,20 750,3 765,1 768,-3 800,-28 830,-5 840,15
    860,32 876,32`);
for (let i = 0; i < 256; i++) {
    const x = 1.2 + i * 2.76;
    const h = at(hist, x * 3, 1) / 3;
    const prev = at(hist, x * 3 - 8, 1) / 3;
    const color = h > 0 ? UP : '#dc4a58';
    add('macd', 'rect', {
        x: x - 0.9, y: h > 0 ? 1528 - h : 1528, width: 1.9, height: Math.max(0.6, Math.abs(h)),
        fill: h < prev ? color : '#fff', stroke: color, 'stroke-width': 0.8
    });
}
line('macdLines', '#cc3463', toPx(halves(`0,662 50,660 90,657 122,640 150,650 240,643 300,645 330,635 360,607 430,602
    480,605 530,593 570,592 590,610 620,640 650,665 690,678 750,677 810,655 870,655 890,640 910,600 945,577 960,585
    985,585 1020,605 1060,627 1140,628 1165,650 1200,675 1225,700 1236,725`,
    `0,730 15,748 30,757 70,740 130,735 180,710 235,693 250,712 275,710 310,690 345,672 375,640 400,632 425,645
    460,700 490,722 525,745 545,785 570,815 600,837 615,845 632,840 660,800 685,787 700,790 725,767 760,777 780,790
    800,825 820,828 845,785 875,750`)));
line('macdLines', '#8a2cc2', toPx(halves(`0,664 90,662 140,650 240,645 310,645 350,635 400,615 460,605 530,600 575,593
    610,610 650,640 690,662 740,675 790,672 830,658 885,658 920,630 960,598 995,590 1040,602 1100,620 1150,630
    1190,650 1236,688`,
    `5,700 40,735 90,740 150,730 230,703 290,705 345,685 390,650 420,643 450,665 500,705 535,730 570,775 632,828
    690,808 740,780 775,780 820,808 840,808 875,780`)));
```
